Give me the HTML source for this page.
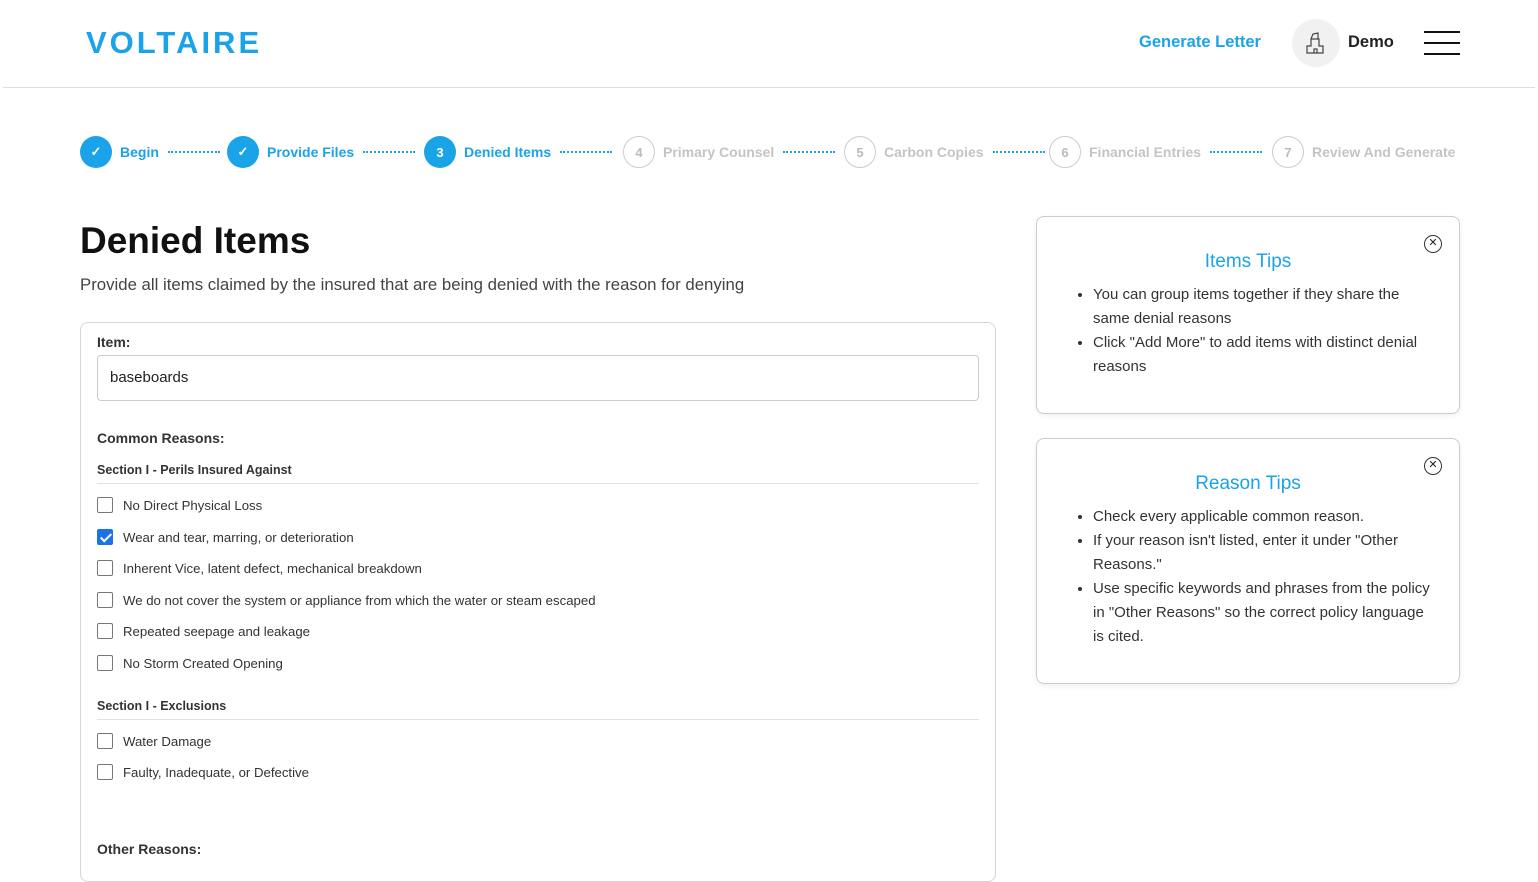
<!DOCTYPE html>
<html><head><meta charset="utf-8"><style>
*{box-sizing:border-box;margin:0;padding:0}
body{width:1538px;height:870px;overflow:hidden;background:#fff;font-family:"Liberation Sans",sans-serif;color:#222;position:relative}
header{height:88px;border-bottom:1px solid #ddd;margin:0 3px;position:relative}
.logo{position:absolute;left:83px;top:24px;font-size:31px;font-weight:bold;color:#1aa3e8;letter-spacing:3px;line-height:38px}
.gen{position:absolute;left:1136px;top:33px;font-size:16.5px;font-weight:bold;color:#1aa3e8}
.av{position:absolute;left:1289px;top:19px;width:48px;height:48px;border-radius:50%;background:#f1f1f1}
.demo{position:absolute;left:1345px;top:33px;font-size:16.5px;font-weight:bold}
.ham{position:absolute;left:1421px;top:31px;width:36px}
.ham i{display:block;height:2px;background:#111;margin-bottom:9px}
.step{position:absolute;top:136px;display:flex;align-items:center;font-size:14px;font-weight:bold;white-space:nowrap}
.c{width:32px;height:32px;border-radius:50%;display:flex;align-items:center;justify-content:center;font-size:13px;margin-right:8px}
.on .c{background:#1aa3e8;color:#fff}.on{color:#1aa3e8}
.off .c{border:1.5px solid #ccc;color:#bbb}.off{color:#c4c4c4}
.dots{display:inline-block;width:52px;border-top:2px dotted #1aa3e8;margin-left:9px}
h1{position:absolute;left:80px;top:220px;font-size:37px;font-weight:bold;color:#111}
.sub{position:absolute;left:80px;top:275px;font-size:16.8px;color:#444}
.card{position:absolute;left:80px;top:322px;width:916px;height:560px;border:1px solid #d6d6d6;border-radius:8px}
.lbl{position:absolute;left:16px;font-size:14px;font-weight:bold;color:#333}
.inp{position:absolute;left:16px;top:32px;width:882px;height:46px;border:1px solid #ccc;border-radius:4px;padding:13px 12px;font-size:15px}
.sec{position:absolute;left:16px;width:882px;font-size:12.5px;font-weight:bold;color:#333;border-bottom:1px solid #e2e2e2;padding-bottom:6px}
.cb{position:absolute;left:16px;font-size:13.2px;color:#333;display:flex;align-items:center}
.cb i{width:16px;height:16px;border:1px solid #777;border-radius:2px;margin-right:10px;display:inline-block}
.cb i.k{background:#1a73e8;border-color:#1a73e8;position:relative}
.cb i.k:after{content:"";position:absolute;left:5px;top:1px;width:4px;height:9px;border:solid #fff;border-width:0 2px 2px 0;transform:rotate(45deg)}
.tip{position:absolute;left:1036px;width:424px;border:1px solid #ccc;border-radius:8px;box-shadow:0 2px 6px rgba(0,0,0,.06)}
.tip h3{text-align:center;color:#1aa3e8;font-size:19px;font-weight:normal;margin-top:34px;margin-bottom:10px}
.tip ul{margin-left:56px;margin-right:28px;font-size:15px;color:#333;line-height:24px}
.x{position:absolute;right:17px;top:18px;width:18px;height:18px;border:1.5px solid #333;border-radius:50%;font-size:11px;text-align:center;line-height:15px}
</style></head><body>
<header>
<div class="logo">VOLTAIRE</div>
<div class="gen">Generate Letter</div>
<div class="av"><svg width="48" height="48" viewBox="0 0 48 48" fill="none" stroke="#444" stroke-width="1.2"><path d="M15 34V27h4v-7h8v7h4v7zM19 20l2-5 5-1v6M22 34v-4h3v4"/></svg></div>
<div class="demo">Demo</div>
<div class="ham"><i></i><i></i><i></i></div>
</header>
<div class="step on" style="left:80px"><span class="c">✓</span>Begin<span class="dots"></span></div>
<div class="step on" style="left:227px"><span class="c">✓</span>Provide Files<span class="dots"></span></div>
<div class="step on" style="left:424px"><span class="c">3</span>Denied Items<span class="dots"></span></div>
<div class="step off" style="left:623px"><span class="c">4</span>Primary Counsel<span class="dots"></span></div>
<div class="step off" style="left:844px"><span class="c">5</span>Carbon Copies<span class="dots"></span></div>
<div class="step off" style="left:1049px"><span class="c">6</span>Financial Entries<span class="dots"></span></div>
<div class="step off" style="left:1272px"><span class="c">7</span>Review And Generate</div>
<h1>Denied Items</h1>
<div class="sub">Provide all items claimed by the insured that are being denied with the reason for denying</div>
<div class="card">
<div class="lbl" style="top:11px">Item:</div>
<div class="inp">baseboards</div>
<div class="lbl" style="top:107px">Common Reasons:</div>
<div class="sec" style="top:140px">Section I - Perils Insured Against</div>
<div class="cb" style="top:174px"><i></i>No Direct Physical Loss</div>
<div class="cb" style="top:206px"><i class="k"></i>Wear and tear, marring, or deterioration</div>
<div class="cb" style="top:237px"><i></i>Inherent Vice, latent defect, mechanical breakdown</div>
<div class="cb" style="top:269px"><i></i>We do not cover the system or appliance from which the water or steam escaped</div>
<div class="cb" style="top:300px"><i></i>Repeated seepage and leakage</div>
<div class="cb" style="top:332px"><i></i>No Storm Created Opening</div>
<div class="sec" style="top:376px">Section I - Exclusions</div>
<div class="cb" style="top:410px"><i></i>Water Damage</div>
<div class="cb" style="top:441px"><i></i>Faulty, Inadequate, or Defective</div>
<div class="lbl" style="top:518px">Other Reasons:</div>
</div>
<div class="tip" style="top:216px;height:198px"><span class="x">✕</span><h3>Items Tips</h3><ul><li>You can group items together if they share the same denial reasons</li><li>Click "Add More" to add items with distinct denial reasons</li></ul></div>
<div class="tip" style="top:438px;height:246px"><span class="x">✕</span><h3>Reason Tips</h3><ul><li>Check every applicable common reason.</li><li>If your reason isn't listed, enter it under "Other Reasons."</li><li>Use specific keywords and phrases from the policy in "Other Reasons" so the correct policy language is cited.</li></ul></div>
</body></html>
